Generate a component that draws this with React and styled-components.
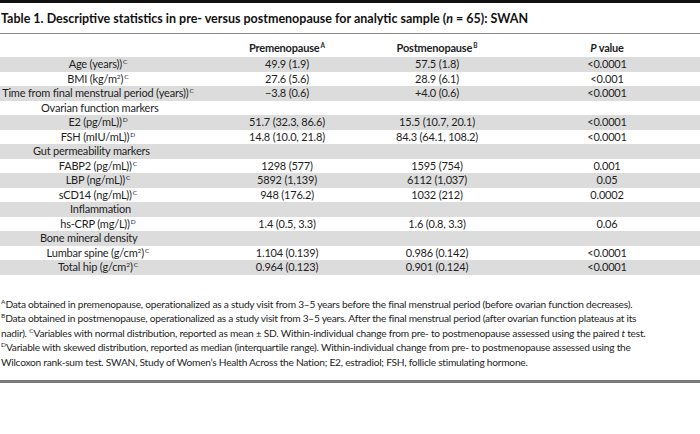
import React from "react";
import styled, { createGlobalStyle } from "styled-components";

const GlobalStyle = createGlobalStyle`
  html, body { margin: 0; padding: 0; background: #ffffff; }
  body { font-family: Lato, "Open Sans", sans-serif; color: #1e1e1e; }
`;

const Page = styled.div`
  width: 700px;
  background: #fff;
  display: flex;
  flex-direction: column;
`;

const TopBar = styled.div`
  flex: none;
  height: 3px;
  background: #111;
`;

const Title = styled.h1`
  flex: none;
  margin: 0;
  padding: 9px 0 0 1px;
  height: 21px;
  font-size: 12.5px;
  font-weight: 700;
  line-height: 14px;
  color: #111;
  white-space: nowrap;
  border-bottom: 1px solid #8a8a8a;
`;

const Table = styled.div`
  flex: none;
  display: flex;
  flex-direction: column;
  padding-top: 4px;
`;

const Row = styled.div`
  display: grid;
  grid-template-columns: 196px 182px 118px 204px;
  height: ${(p) => (p.$header ? "19px" : "14.5px")};
  line-height: ${(p) => (p.$header ? "19px" : "14.5px")};
  background: ${(p) => (p.$shaded ? "#dcdcdc" : "transparent")};
  font-size: 11px;
  letter-spacing: -0.2px;
  font-weight: ${(p) => (p.$header ? 700 : 400)};
  white-space: nowrap;
`;

const Cell = styled.div`
  text-align: center;
  padding-left: ${(p) => p.$shift || 0}px;
`;

const SectionLabel = styled.div`
  text-align: left;
  padding-left: ${(p) => p.$indent}px;
`;

const Ital = styled.span`
  font-style: italic;
`;

const Sup = styled.sup`
  font-size: 6.5px;
  line-height: 0;
  vertical-align: 4px;
  margin-left: ${(p) => (p.$tight ? 0 : 1)}px;
  letter-spacing: 0;
`;

const Footnotes = styled.div`
  flex: none;
  padding: 22px 0 0 1px;
  font-size: 10.2px;
  letter-spacing: -0.25px;
  line-height: 14.5px;
`;

const FootLine = styled.div`
  white-space: nowrap;
`;

const BottomRule = styled.div`
  flex: none;
  margin-top: 11px;
  height: 3px;
  background: #7a7a7a;
`;

const rows = [
  { label: "Age (years)", sup: "C", pre: "49.9 (1.9)", post: "57.5 (1.8)", p: "<0.0001" },
  { label: "BMI (kg/m", sq: true, sup: "C", pre: "27.6 (5.6)", post: "28.9 (6.1)", p: "<0.001" },
  { label: "Time from final menstrual period (years)", sup: "C", pre: "\u22123.8 (0.6)", post: "+4.0 (0.6)", p: "<0.0001" },
  { section: "Ovarian function markers", indent: 41 },
  { label: "E2 (pg/mL)", sup: "D", pre: "51.7 (32.3, 86.6)", post: "15.5 (10.7, 20.1)", p: "<0.0001" },
  { label: "FSH (mIU/mL)", sup: "D", pre: "14.8 (10.0, 21.8)", post: "84.3 (64.1, 108.2)", p: "<0.0001" },
  { section: "Gut permeability markers", indent: 33 },
  { label: "FABP2 (pg/mL)", sup: "C", pre: "1298 (577)", post: "1595 (754)", p: "0.001" },
  { label: "LBP (ng/mL)", sup: "C", pre: "5892 (1,139)", post: "6112 (1,037)", p: "0.05" },
  { label: "sCD14 (ng/mL)", sup: "C", pre: "948 (176.2)", post: "1032 (212)", p: "0.0002" },
  { section: "Inflammation", indent: 70 },
  { label: "hs-CRP (mg/L)", sup: "D", pre: "1.4 (0.5, 3.3)", post: "1.6 (0.8, 3.3)", p: "0.06" },
  { section: "Bone mineral density", indent: 40 },
  { label: "Lumbar spine (g/cm", sq: true, sup: "C", pre: "1.104 (0.139)", post: "0.986 (0.142)", p: "<0.0001" },
  { label: "Total hip (g/cm", sq: true, sup: "C", pre: "0.964 (0.123)", post: "0.901 (0.124)", p: "<0.0001" },
];

export default function App() {
  return (
    <Page>
      <GlobalStyle />
      <TopBar />
      <Title>
        Table 1. Descriptive statistics in pre- versus postmenopause for analytic sample (<Ital>n</Ital> = 65): SWAN
      </Title>
      <Table>
        <Row $header>
          <Cell />
          <Cell>
            Premenopause<Sup>A</Sup>
          </Cell>
          <Cell>
            Postmenopause<Sup>B</Sup>
          </Cell>
          <Cell $shift={18}>
            <Ital>P</Ital> value
          </Cell>
        </Row>
        {rows.map((r, i) => (
          <Row key={i} $shaded={i % 2 === 0}>
            {r.section ? (
              <SectionLabel $indent={r.indent}>{r.section}</SectionLabel>
            ) : (
              <Cell>
                {r.label}
                {r.sq && <Sup $tight>2</Sup>})<Sup>{r.sup}</Sup>
              </Cell>
            )}
            <Cell>{r.pre}</Cell>
            <Cell>{r.post}</Cell>
            <Cell $shift={18}>{r.p}</Cell>
          </Row>
        ))}
      </Table>
      <Footnotes>
        <FootLine>
          <Sup $tight>A</Sup>Data obtained in premenopause, operationalized as a study visit from 3–5 years before the final menstrual period (before ovarian function decreases).
        </FootLine>
        <FootLine>
          <Sup $tight>B</Sup>Data obtained in postmenopause, operationalized as a study visit from 3–5 years. After the final menstrual period (after ovarian function plateaus at its
        </FootLine>
        <FootLine>
          nadir). <Sup $tight>C</Sup>Variables with normal distribution, reported as mean ± SD. Within-individual change from pre- to postmenopause assessed using the paired <Ital>t</Ital> test.
        </FootLine>
        <FootLine>
          <Sup $tight>D</Sup>Variable with skewed distribution, reported as median (interquartile range). Within-individual change from pre- to postmenopause assessed using the
        </FootLine>
        <FootLine>
          Wilcoxon rank-sum test. SWAN, Study of Women’s Health Across the Nation; E2, estradiol; FSH, follicle stimulating hormone.
        </FootLine>
      </Footnotes>
      <BottomRule />
    </Page>
  );
}
